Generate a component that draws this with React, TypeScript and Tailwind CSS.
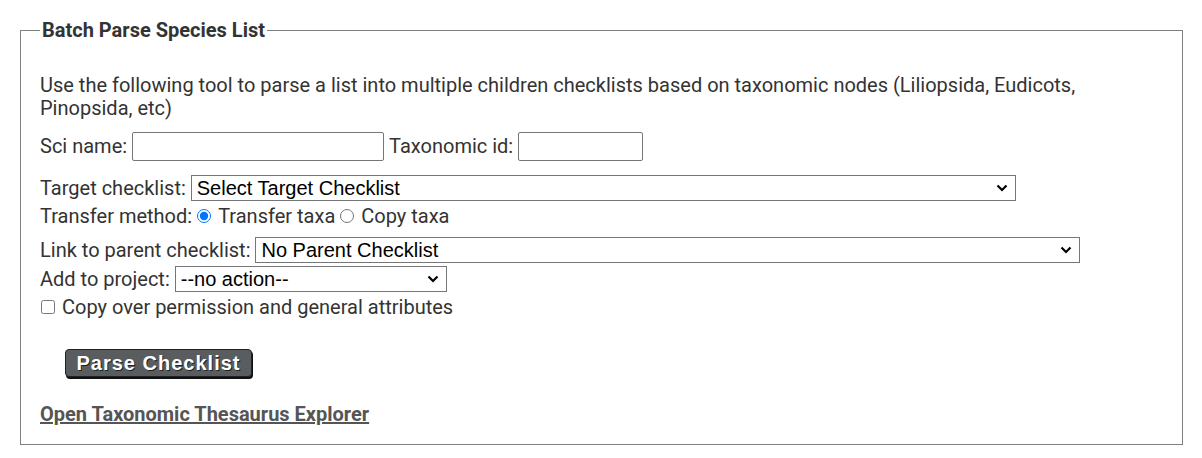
import { useState } from "react"

function Chevron() {
  return (
    <svg
      className="pointer-events-none absolute right-[8px] top-1/2 -translate-y-1/2"
      width="12"
      height="8"
      viewBox="0 0 12 8"
    >
      <path d="M1.5 1.5 L6 6 L10.5 1.5" fill="none" stroke="#000" strokeWidth="2.2" />
    </svg>
  )
}

function Select({ width, options }: { width: string; options: string[] }) {
  return (
    <span className={`relative block ${width}`}>
      <select className="block h-[26px] w-full appearance-none border border-[#767676] bg-white pl-[5px] pr-[28px] font-['Liberation_Sans',Arial,sans-serif] text-[20px] leading-[24px] text-black">
        {options.map((o) => (
          <option key={o}>{o}</option>
        ))}
      </select>
      <Chevron />
    </span>
  )
}

export default function App() {
  const [method, setMethod] = useState("transfer")
  const [sciName, setSciName] = useState("")
  const [taxId, setTaxId] = useState("")

  return (
    <div className="min-h-screen bg-white px-[20px] pt-[19px] pb-[12px] font-['Roboto','Liberation_Sans',sans-serif] text-[20px] text-[#333]">
      <fieldset className="mr-[-1px] border border-[#808080] pl-[19px] pr-[20px] pb-[15px]">
        <legend className="px-[2px] text-[20px] font-bold leading-[23px] text-[#333]">
          Batch Parse Species List
        </legend>

        <p className="mt-[32px] leading-[23px]">
          Use the following tool to parse a list into multiple children checklists based on taxonomic nodes (Liliopsida,
          Eudicots, Pinopsida, etc)
        </p>

        <div className="mt-[11px] flex items-center">
          <span>Sci name:</span>
          <input
            value={sciName}
            onChange={(e) => setSciName(e.target.value)}
            className="ml-[5px] h-[29px] w-[252px] rounded-[2px] border border-[#767676] bg-white px-[4px]"
          />
          <span className="ml-[5px]">Taxonomic id:</span>
          <input
            value={taxId}
            onChange={(e) => setTaxId(e.target.value)}
            className="ml-[5px] h-[29px] w-[125px] rounded-[2px] border border-[#767676] bg-white px-[4px]"
          />
        </div>

        <div className="mt-[14px] flex items-center leading-[26px]">
          <span>Target checklist:</span>
          <span className="ml-[5px]">
            <Select width="w-[825px]" options={["Select Target Checklist"]} />
          </span>
        </div>

        <div className="mt-[2px] flex items-center leading-[26px]">
          <span>Transfer method:</span>
          <input
            type="radio"
            name="method"
            checked={method === "transfer"}
            onChange={() => setMethod("transfer")}
            className="ml-[5px] mr-[7px] h-[14px] w-[14px]"
          />
          <span>Transfer taxa</span>
          <input
            type="radio"
            name="method"
            checked={method === "copy"}
            onChange={() => setMethod("copy")}
            className="ml-[5px] mr-[7px] h-[14px] w-[14px]"
          />
          <span>Copy taxa</span>
        </div>

        <div className="mt-[8px] flex items-center leading-[26px]">
          <span>Link to parent checklist:</span>
          <span className="ml-[5px]">
            <Select width="w-[825px]" options={["No Parent Checklist"]} />
          </span>
        </div>

        <div className="mt-[3px] flex items-center leading-[26px]">
          <span>Add to project:</span>
          <span className="ml-[5px]">
            <Select width="w-[272px]" options={["--no action--"]} />
          </span>
        </div>

        <label className="mt-[2px] flex items-center leading-[26px]">
          <input type="checkbox" className="ml-[1px] mr-[7px] h-[14px] w-[14px]" />
          <span>Copy over permission and general attributes</span>
        </label>

        <div className="mt-[28px] pl-[25px]">
          <button className="h-[28px] w-[187px] rounded-[4px] border border-[#222] bg-[#595d60] font-['Liberation_Sans',Arial,sans-serif] text-[20px] font-bold leading-[24px] tracking-[1px] text-white shadow-[1px_2px_0_#111] [text-shadow:1px_1px_0_#222]">
            Parse Checklist
          </button>
        </div>

        <div className="mt-[21px]">
          <a href="#" className="font-bold text-[#555] underline">
            Open Taxonomic Thesaurus Explorer
          </a>
        </div>
      </fieldset>
    </div>
  )
}
